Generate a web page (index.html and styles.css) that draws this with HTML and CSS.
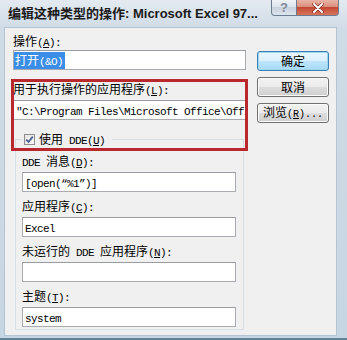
FILE: index.html
```html
<!DOCTYPE html>
<html lang="zh-CN">
<head>
    <meta charset="UTF-8">
    <title>编辑这种类型的操作</title>
    <link rel="stylesheet" href="styles.css">
</head>
<body>
    <div class="window">
        <div class="titlebar">
            <span class="title">编辑这种类型的操作: Microsoft Excel 97...</span>
            <div class="caption-buttons">
                <span class="cap-btn help">?</span>
                <span class="cap-btn close">
                    <svg width="14" height="10" viewBox="0 0 14 10">
                        <path d="M3 1 L11 9 M11 1 L3 9" stroke="#7a2418" stroke-width="3.4" stroke-linecap="round"/>
                        <path d="M3 1 L11 9 M11 1 L3 9" stroke="#ffffff" stroke-width="2" stroke-linecap="round"/>
                    </svg>
                </span>
            </div>
        </div>

        <div class="client">
            <div class="main">
                <label class="lbl">操作<span class="en">(<u>A</u>):</span></label>
                <div class="field wide"><span class="sel">打开<span class="en">(&amp;O)</span></span></div>

                <label class="lbl gap">用于执行操作的应用程序<span class="en">(<u>L</u>):</span></label>
                <div class="field wide app"><span class="en">"C:\Program Files\Microsoft Office\Office\EXCEL.EXE"</span></div>

                <fieldset class="group">
                    <legend>
                        <span class="check">
                            <svg width="9" height="9" viewBox="0 0 9 9">
                                <path d="M1.2 4.6 L3.6 7 L7.8 1.6" fill="none" stroke="#4b5f8f" stroke-width="1.8"/>
                            </svg>
                        </span>
                        <span>使用<span class="en"> DDE(<u>U</u>)</span></span>
                    </legend>

                    <label class="lbl first"><span class="en">DDE </span>消息<span class="en">(<u>D</u>):</span></label>
                    <div class="field"><span class="en">[open(“%1”)]</span></div>

                    <label class="lbl">应用程序<span class="en">(<u>C</u>):</span></label>
                    <div class="field"><span class="en">Excel</span></div>

                    <label class="lbl">未运行的<span class="en"> DDE </span>应用程序<span class="en">(<u>N</u>):</span></label>
                    <div class="field"></div>

                    <label class="lbl">主题<span class="en">(<u>T</u>):</span></label>
                    <div class="field"><span class="en">system</span></div>
                </fieldset>
            </div>

            <div class="buttons">
                <button class="btn default">确定</button>
                <button class="btn">取消</button>
                <button class="btn">浏览<span class="btn-en">(<u>R</u>)...</span></button>
            </div>
        </div>

        <div class="highlight"></div>
    </div>
</body>
</html>
```

FILE: styles.css
```css
body {
    margin: 0;
    font-family: "Noto Sans CJK SC", sans-serif;
    font-size: 12px;
    color: #000;
}
.window {
    position: relative;
    width: 347px;
    height: 340px;
    display: flex;
    flex-direction: column;
    overflow: hidden;
    background: linear-gradient(#e3eaf1, #cfdbe6 30px, #c7d6e3);
    border-bottom: 2px solid #5f8296;
    box-sizing: border-box;
}
.titlebar {
    height: 27px;
    flex-shrink: 0;
    display: flex;
    align-items: flex-start;
    padding: 0 8px 0 8px;
}
.title {
    font-family: "Liberation Sans", "Noto Sans CJK SC", sans-serif;
    font-weight: bold;
    font-size: 13px;
    line-height: 27px;
    white-space: nowrap;
    overflow: hidden;
    color: #1a1a1a;
}
.caption-buttons {
    display: flex;
    margin-left: auto;
}
.cap-btn {
    height: 16px;
    display: flex;
    align-items: center;
    justify-content: center;
    border: 1px solid #6b7c8e;
    border-top: none;
    box-sizing: border-box;
}
.help {
    width: 26px;
    border-radius: 0 0 0 4px;
    background: linear-gradient(#eef2f6, #dbe2ea 50%, #c8d2dd 50%, #dde5ee);
    color: #7f8a99;
    font-family: "Liberation Sans", sans-serif;
    font-weight: bold;
    font-size: 13px;
    line-height: 16px;
}
.close {
    width: 42px;
    border-left: none;
    border-radius: 0 0 4px 0;
    background: linear-gradient(#e8b3a6, #d98a78 50%, #c54a35 50%, #d8735c);
}

.client {
    flex: 1;
    display: flex;
    margin: 0 10px 2px 4px;
    padding: 6px 0 0 8px;
    background: #f0f0f0;
    border: 1px solid #b4c4d2;
}
.main {
    width: 233px;
    display: flex;
    flex-direction: column;
}
.en {
    font-family: "Liberation Mono", monospace;
    font-size: 11px;
    letter-spacing: -0.6px;
    white-space: pre;
}
.lbl {
    display: block;
    height: 14px;
    line-height: 14px;
    white-space: nowrap;
}
.lbl.gap {
    margin-top: 12px;
}
.field {
    height: 20px;
    margin-top: 3px;
    padding-left: 2px;
    box-sizing: border-box;
    background: #fff;
    border: 1px solid #a9abb2;
    border-top-color: #9a9ca3;
    line-height: 18px;
    white-space: nowrap;
    overflow: hidden;
}
.field.wide {
    width: 233px;
    margin-top: 2px;
}
.field.app {
    margin-top: 4px;
}
.sel {
    display: inline-block;
    margin-left: -2px;
    padding: 0 2px 0 1px;
    line-height: 16px;
    background: #3a8ee8;
    color: #fff;
}

.group {
    margin: 12px 2px 0 2px;
    padding: 7px 7px 2px 6px;
    min-width: 0;
    border: 1px solid #d5dfe5;
    display: flex;
    flex-direction: column;
}
.group legend {
    padding: 0 7px 0 2px;
    height: 15px;
    line-height: 15px;
    display: flex;
    align-items: center;
    white-space: nowrap;
}
.check {
    width: 11px;
    height: 11px;
    margin-right: 4px;
    box-sizing: border-box;
    border: 1px solid #8e8f8f;
    background: linear-gradient(135deg, #e4e4e4, #f7f7f7);
    display: flex;
    align-items: center;
    justify-content: center;
}
.group .lbl {
    margin-top: 7px;
}
.group .lbl.first {
    margin-top: 0;
}
.group .field {
    width: 214px;
    margin-top: 4px;
}

.buttons {
    display: flex;
    flex-direction: column;
    gap: 6px;
    margin-left: 11px;
    padding-top: 17px;
}
.btn {
    width: 72px;
    height: 20px;
    padding: 0;
    font-family: "Noto Sans CJK SC", sans-serif;
    font-size: 12px;
    line-height: 16px;
    color: #000;
    border: 1px solid #707070;
    border-radius: 3px;
    background: linear-gradient(#f2f2f2, #ebebeb 50%, #dddddd 50%, #cfcfcf);
    box-shadow: inset 0 0 0 1px #fbfbfb;
}
.btn-en {
    font-family: "Liberation Mono", monospace;
    font-size: 10px;
}
.btn.default {
    border-color: #3c7fb1;
    background: linear-gradient(#eaf6fd, #d9f0fc 50%, #bee6fd 50%, #a7d9f5);
    box-shadow: inset 0 0 0 1px #9fd6f2;
}

.highlight {
    position: absolute;
    left: 11px;
    top: 79px;
    width: 237px;
    height: 72px;
    box-sizing: border-box;
    border: 3px solid #b9282d;
}
```
